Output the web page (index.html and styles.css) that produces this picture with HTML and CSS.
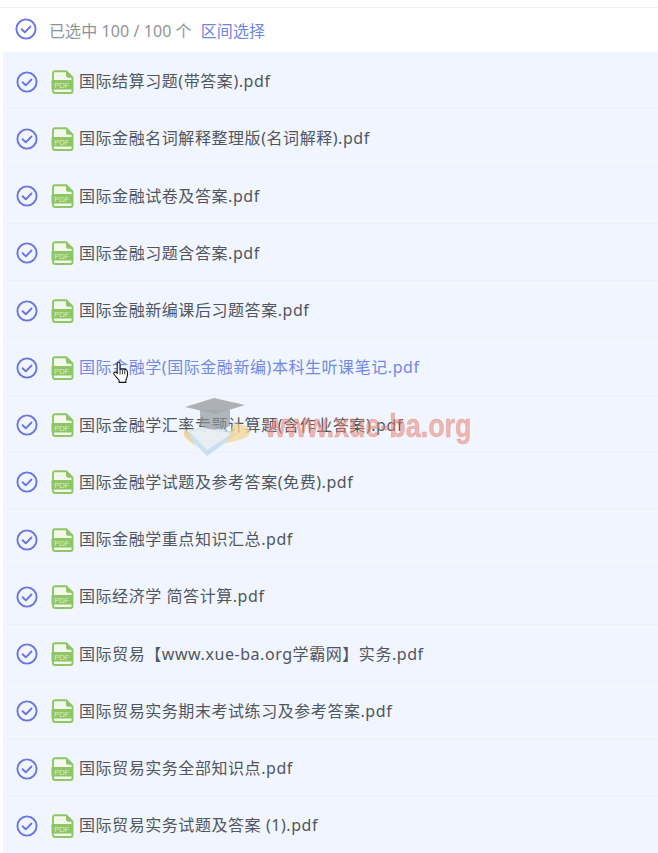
FILE: index.html
```html
<!DOCTYPE html>
<html lang="en">

<head>
    <meta charset="UTF-8">
    <meta name="viewport" content="width=device-width, initial-scale=1.0">
    <title>文件列表</title>
    <link rel="stylesheet" href="styles.css">
</head>

<body>
    <svg class="defs" width="0" height="0">
        <symbol id="check" viewBox="0 0 22 22">
            <circle cx="11" cy="11" r="9.6" fill="none" stroke="currentColor" stroke-width="1.9" />
            <path d="M6.6 11.2l3.2 3.1 5.7-5.8" fill="none" stroke="currentColor" stroke-width="1.9" stroke-linecap="round" stroke-linejoin="round" />
        </symbol>
        <symbol id="pdf" viewBox="0 0 23 24">
            <path d="M4 1.2h11.2l6.3 6.3V21a2 2 0 0 1-2 2H4a2 2 0 0 1-2-2V3.2a2 2 0 0 1 2-2z" fill="#f3f8ea" stroke="#8cc665" stroke-width="1.9" />
            <path d="M15 1.2v4.6a2 2 0 0 0 2 2h4.5z" fill="#8cc665" />
            <rect x="0.5" y="10" width="20.5" height="9.5" rx="1.2" fill="#8cc665" />
            <text x="10.7" y="17.6" class="pdf-tag">PDF</text>
        </symbol>
    </svg>

    <div class="panel">
        <div class="select-bar">
            <svg class="check"><use href="#check" /></svg>
            <span class="count">已选中 100 / 100 个</span>
            <a class="range-link">区间选择</a>
        </div>

        <ul class="file-list">
            <li class="file-row"><svg class="check"><use href="#check" /></svg><svg class="pdf-icon"><use href="#pdf" /></svg><span>国际结算习题(带答案).pdf</span></li>
            <li class="file-row"><svg class="check"><use href="#check" /></svg><svg class="pdf-icon"><use href="#pdf" /></svg><span>国际金融名词解释整理版(名词解释).pdf</span></li>
            <li class="file-row"><svg class="check"><use href="#check" /></svg><svg class="pdf-icon"><use href="#pdf" /></svg><span>国际金融试卷及答案.pdf</span></li>
            <li class="file-row"><svg class="check"><use href="#check" /></svg><svg class="pdf-icon"><use href="#pdf" /></svg><span>国际金融习题含答案.pdf</span></li>
            <li class="file-row"><svg class="check"><use href="#check" /></svg><svg class="pdf-icon"><use href="#pdf" /></svg><span>国际金融新编课后习题答案.pdf</span></li>
            <li class="file-row hovered"><svg class="check"><use href="#check" /></svg><svg class="pdf-icon"><use href="#pdf" /></svg><span>国际金融学(国际金融新编)本科生听课笔记.pdf</span></li>
            <li class="file-row"><svg class="check"><use href="#check" /></svg><svg class="pdf-icon"><use href="#pdf" /></svg><span>国际金融学汇率专题计算题(含作业答案).pdf</span></li>
            <li class="file-row"><svg class="check"><use href="#check" /></svg><svg class="pdf-icon"><use href="#pdf" /></svg><span>国际金融学试题及参考答案(免费).pdf</span></li>
            <li class="file-row"><svg class="check"><use href="#check" /></svg><svg class="pdf-icon"><use href="#pdf" /></svg><span>国际金融学重点知识汇总.pdf</span></li>
            <li class="file-row"><svg class="check"><use href="#check" /></svg><svg class="pdf-icon"><use href="#pdf" /></svg><span>国际经济学 简答计算.pdf</span></li>
            <li class="file-row"><svg class="check"><use href="#check" /></svg><svg class="pdf-icon"><use href="#pdf" /></svg><span>国际贸易【www.xue-ba.org学霸网】实务.pdf</span></li>
            <li class="file-row"><svg class="check"><use href="#check" /></svg><svg class="pdf-icon"><use href="#pdf" /></svg><span>国际贸易实务期末考试练习及参考答案.pdf</span></li>
            <li class="file-row"><svg class="check"><use href="#check" /></svg><svg class="pdf-icon"><use href="#pdf" /></svg><span>国际贸易实务全部知识点.pdf</span></li>
            <li class="file-row"><svg class="check"><use href="#check" /></svg><svg class="pdf-icon"><use href="#pdf" /></svg><span>国际贸易实务试题及答案 (1).pdf</span></li>
        </ul>
    </div>

    <!-- Watermark sits over the list -->
    <div class="watermark">
        <svg class="wm-logo" viewBox="0 0 76 62">
            <path d="M2 37l23 23 31-22-26-10z" fill="#b9d6e8" opacity="0.7" />
            <path d="M8 36l17 18 24-16-20-9z" fill="#f2f4f6" opacity="0.75" />
            <path d="M3 33q-3 8 3 11l7 6-8-16z" fill="#f4cf8c" opacity="0.8" />
            <path d="M52 27q16 2 16 9t-24 11z" fill="#f4d595" opacity="0.75" />
            <path d="M18 14h30v16q-15 7-30 0z" fill="#8f9398" opacity="0.65" />
            <path d="M3 11L32 2l31 7-29 9z" fill="#a5a8ad" opacity="0.9" />
        </svg>
        <span class="wm-text">www.xue-ba.org</span>
    </div>

    <!-- Hand cursor -->
    <svg class="cursor" viewBox="0 0 17 24">
        <path d="M5 1.5c1-.9 2.400-.3 2.400 1v6.200c1.600-.6 6.300-.5 7.300 1 .8 1.200.8 3.500.6 5.300-.2 2-1 3.300-1.600 5v2.500H6.500v-2.200C5 18 2 15.800 1 13.500c-.6-1.500.8-2.600 2-1.800l1.500 1.200V2.500c0-.4.200-.8.500-1z" fill="#fff" stroke="#111" stroke-width="1.100" stroke-linejoin="round" />
        <path d="M7.500 9v5M10 9v5M12.500 9.500V14" fill="none" stroke="#111" stroke-width="0.900" />
    </svg>
</body>

</html>
```

FILE: styles.css
```css
html,
body {
    margin: 0;
    padding: 0;
}

body {
    position: relative;
    height: 853px;
    overflow: hidden;
    background-color: #fff;
    font-family: "Noto Sans", "Noto Sans CJK SC", sans-serif;
    font-size: 16px;
    color: #50555e;
}

.defs {
    position: absolute;
}

.panel {
    padding-top: 7px;
}

/* Top bar with the select all state */
.select-bar {
    display: flex;
    align-items: center;
    height: 44px;
    padding-left: 16px;
    border-top: 1px solid #f1f2f4;
    letter-spacing: 0.08px;
}

.select-bar .check {
    margin-right: 12px;
    margin-bottom: 2px;
    margin-left: -1px;
}

.count {
    color: #8f949c;
}

.range-link {
    margin-left: 9px;
    color: #6f86dc;
}

.check {
    flex: none;
    width: 22px;
    height: 22px;
    color: #6a75e0;
}

/* File rows */
.file-list {
    list-style: none;
    margin: 0 0 0 3px;
    padding: 0;
}

.file-row {
    display: flex;
    align-items: center;
    box-sizing: border-box;
    height: 57.25px;
    padding-left: 13px;
    background-color: #f0f5ff;
    border-bottom: 1px solid #ebf0fb;
    letter-spacing: 0.56px;
}

.file-row .check {
    margin-top: 3px;
}

.file-row.hovered {
    color: #7289e0;
}

.pdf-icon {
    flex: none;
    width: 23px;
    height: 24px;
    margin: 3px 5px 0 13px;
}

.pdf-tag {
    font-family: "Liberation Sans", sans-serif;
    font-size: 7.500px;
    letter-spacing: 0;
    fill: #dcecc8;
    text-anchor: middle;
}

/* Overlays */
.watermark {
    position: absolute;
    left: 182px;
    top: 396px;
    display: flex;
    align-items: center;
    pointer-events: none;
}

.wm-logo {
    width: 76px;
    height: 62px;
}

.wm-text {
    margin-left: 7px;
    margin-top: -4px;
    font-family: "Liberation Sans", sans-serif;
    font-size: 34px;
    font-weight: bold;
    line-height: 1;
    color: rgba(232, 130, 115, 0.55);
    -webkit-text-stroke: 0.5px rgba(232, 130, 115, 0.55);
    filter: blur(0.6px);
    white-space: nowrap;
    transform: scaleX(0.79);
    transform-origin: left center;
}

.cursor {
    position: absolute;
    left: 113px;
    top: 361px;
    width: 16px;
    height: 23px;
}
```
